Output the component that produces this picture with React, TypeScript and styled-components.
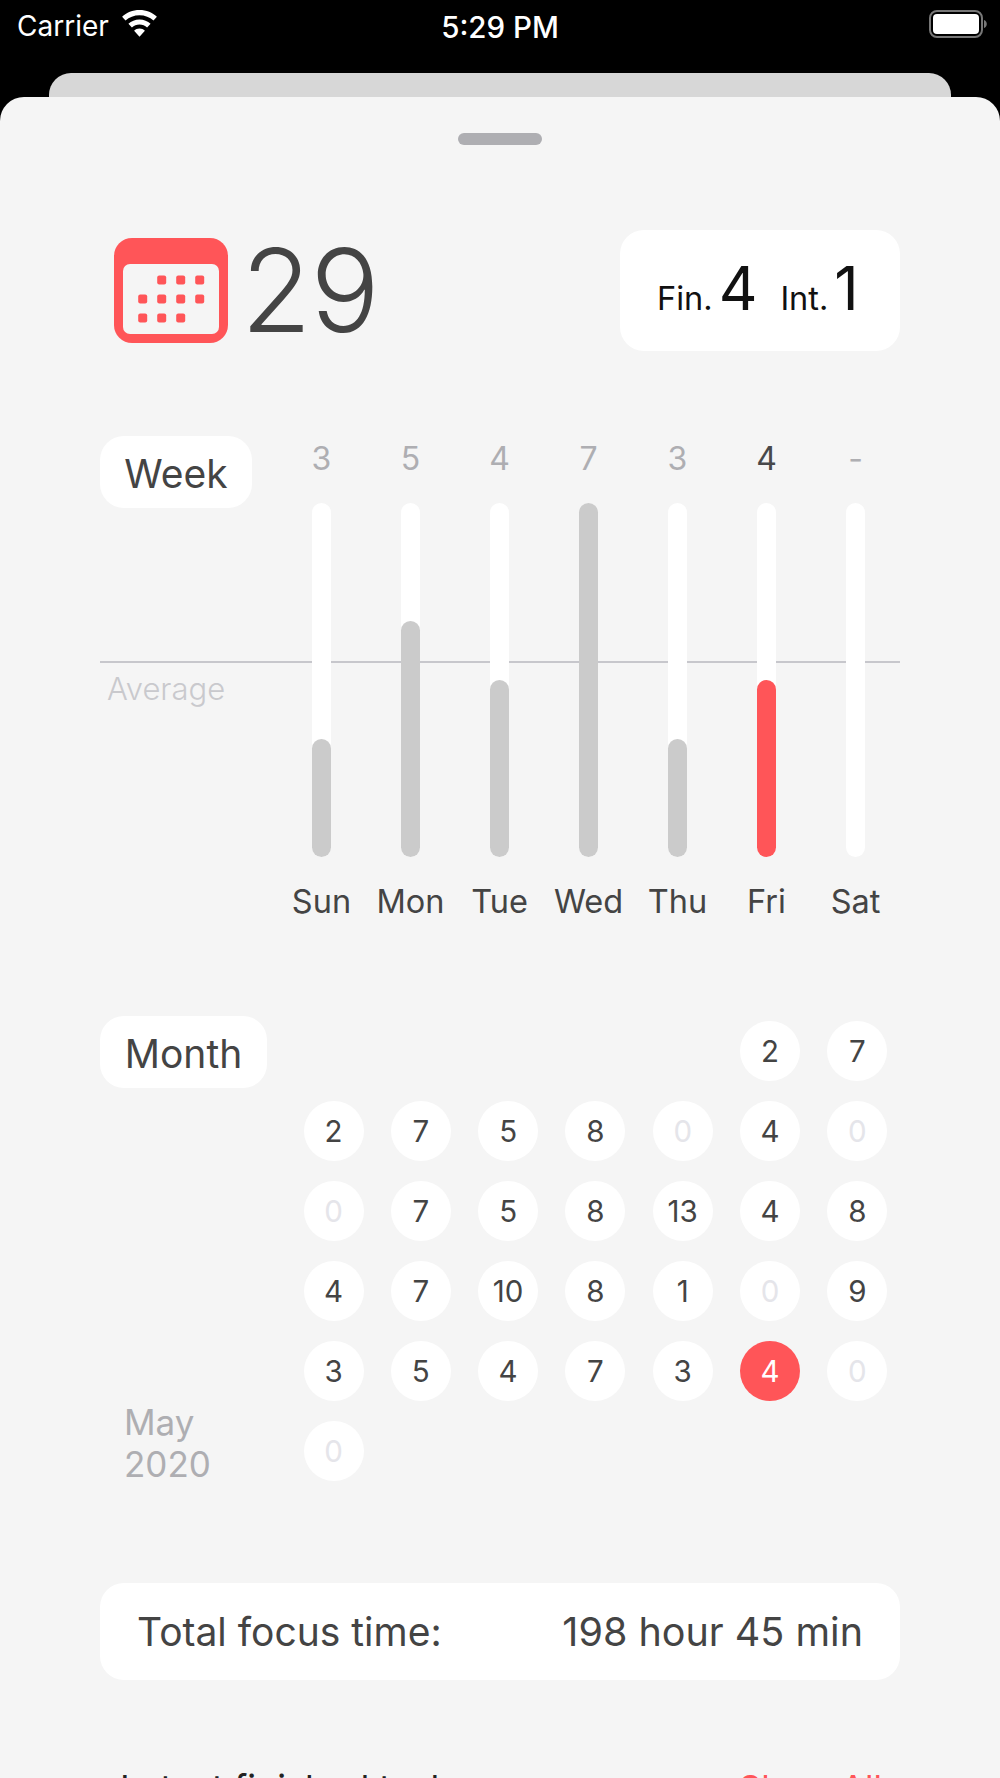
import React from "react";
import styled, { createGlobalStyle } from "styled-components";

const Global = createGlobalStyle`
  html, body { margin: 0; padding: 0; background: #000; }
  * { box-sizing: border-box; }
  body { font-family: Inter, "Liberation Sans", sans-serif; }
`;

const Screen = styled.div`
  width: 1000px;
  height: 1778px;
  overflow: hidden;
  background: #000;
  position: relative;
`;

const StatusBar = styled.div`
  height: 73px;
  display: grid;
  grid-template-columns: 1fr auto 1fr;
  padding: 10px 17px 0;
  color: #fff;
  font-size: 28px;
  line-height: 32px;
`;

const StatusLeft = styled.div`
  display: flex;
  align-items: flex-start;
  gap: 12px;
  font-weight: 400;
`;

const Clock = styled.div`
  font-weight: 500;
  font-size: 29.5px;
  padding-top: 1px;
`;

const StatusRight = styled.div`
  display: flex;
  justify-content: flex-end;
  margin-right: -4px;
`;

const BackSheet = styled.div`
  height: 24px;
  margin: 0 49px;
  background: #d7d7d7;
  border-radius: 22px 22px 0 0;
`;

const Sheet = styled.div`
  background: #f5f5f5;
  border-radius: 24px 24px 0 0;
  padding: 36px 100px 0;
  height: 1681px;
`;

const Handle = styled.div`
  width: 84px;
  height: 12px;
  margin: 0 auto;
  border-radius: 6px;
  background: #aeaeb2;
`;

const Header = styled.div`
  margin-top: 85px;
  height: 121px;
  display: flex;
  justify-content: space-between;
  align-items: center;
`;

const DateBlock = styled.div`
  display: flex;
  align-items: center;
  padding-left: 14px;
  gap: 13px;
`;

const DateNumber = styled.div`
  font-size: 115px;
  font-weight: 275;
  line-height: 121px;
  color: #444;
  letter-spacing: -1px;
`;

const Card = styled.div`
  background: #fff;
  border-radius: 24px;
`;

const CountCard = styled(Card)`
  width: 280px;
  height: 121px;
  display: flex;
  align-items: baseline;
  padding: 38px 0 0 37px;
  color: #111;
`;

const CountLabel = styled.span`
  font-size: 32.5px;
  line-height: 40px;
  font-weight: 375;
`;

const CountValue = styled.span<{ $end?: number }>`
  font-size: 60px;
  line-height: 40px;
  font-weight: 375;
  margin: 0 ${(p) => p.$end ?? 0}px 0 6px;
`;

const Pill = styled(Card)<{ $w: number }>`
  height: 72px;
  display: inline-flex;
  align-items: center;
  justify-content: center;
  padding-top: 2px;
  width: ${(p) => p.$w}px;
  font-size: 39px;
  color: #444;
  font-weight: 375;
`;

const WeekSection = styled.section`
  margin-top: 85px;
  position: relative;
  display: grid;
  grid-template-columns: 177px 1fr;
`;

const AverageLine = styled.div`
  position: absolute;
  left: 0;
  right: 0;
  top: 225px;
  height: 2px;
  background: #c7c7cc;
`;

const AverageLabel = styled.div`
  position: absolute;
  left: 7px;
  top: 237px;
  font-size: 31px;
  font-weight: 350;
  line-height: 32px;
  color: #c9c9cd;
`;

const BarGrid = styled.div`
  display: grid;
  grid-template-columns: repeat(7, 89px);
  position: relative;
`;

const BarColumn = styled.div`
  display: flex;
  flex-direction: column;
  align-items: center;
`;

const BarValue = styled.div<{ $today?: boolean }>`
  height: 44px;
  line-height: 46px;
  font-size: 32px;
  font-weight: 375;
  color: ${(p) => (p.$today ? "#48484a" : "#aeaeb2")};
  margin-bottom: 23px;
`;

const BarTrack = styled.div`
  width: 19px;
  height: 354px;
  background: #fff;
  border-radius: 9.5px;
  display: flex;
  align-items: flex-end;
`;

const BarFill = styled.div<{ $today?: boolean }>`
  width: 100%;
  background: ${(p) => (p.$today ? "#ff5558" : "#cbcbcb")};
  border-radius: 9.5px;
`;

const DayLabel = styled.div`
  margin-top: 24px;
  height: 42px;
  line-height: 42px;
  font-size: 32.5px;
  font-weight: 375;
  color: #444;
`;

const MonthSection = styled.section`
  margin-top: 93px;
  display: grid;
  grid-template-columns: 203.5px 584px;
`;

const MonthSide = styled.div`
  display: flex;
  flex-direction: column;
  justify-content: space-between;
  align-items: flex-start;
`;

const MonthName = styled.div`
  padding-left: 24px;
  font-size: 35px;
  font-weight: 375;
  line-height: 42px;
  color: #aeaeb2;
  margin-bottom: -4px;
`;

const DayGrid = styled.div`
  margin-top: 5px;
  display: grid;
  grid-template-columns: repeat(7, 60px);
  grid-auto-rows: 60px;
  column-gap: 27.3px;
  row-gap: 20px;
`;

const DayDot = styled.div<{ $zero?: boolean; $today?: boolean }>`
  width: 60px;
  height: 60px;
  border-radius: 50%;
  display: flex;
  align-items: center;
  justify-content: center;
  font-size: 29.5px;
  font-weight: 375;
  background: ${(p) => (p.$today ? "#ff5558" : "#fff")};
  color: ${(p) => (p.$today ? "#fff" : p.$zero ? "#e5e5ea" : "#444")};
`;

const TotalCard = styled(Card)`
  margin-top: 102px;
  height: 97px;
  padding: 0 37px;
  display: flex;
  justify-content: space-between;
  align-items: center;
  font-size: 39px;
  font-weight: 375;
  color: #444;
`;

const TotalValue = styled.span`
  font-size: 39.5px;
`;

const TasksHeader = styled.div`
  margin-top: 86px;
  padding: 0 18px 0 20px;
  display: flex;
  justify-content: space-between;
  font-size: 36px;
  line-height: 44px;
  color: #222;
`;

const ShowAll = styled.span`
  color: #ff5558;
  font-size: 35px;
`;

const WifiIcon = () => (
  <svg width="37" height="27" viewBox="0 0 36 27" fill="#fff" aria-hidden>
    <path d="M18 0C11 0 5 2.6.6 6.8l3.4 3.8C7.7 7.2 12.6 5.2 18 5.2s10.3 2 14 5.4l3.4-3.8C31 2.6 25 0 18 0z" />
    <path d="M18 9.4c-4.3 0-8.2 1.6-11.1 4.3l3.5 3.9c2-1.8 4.7-3 7.6-3s5.6 1.2 7.6 3l3.5-3.9C26.2 11 22.3 9.4 18 9.4z" />
    <path d="M18 18.6c-2.1 0-4 .8-5.4 2.1L18 26.8l5.4-6.1c-1.4-1.3-3.3-2.1-5.4-2.1z" />
  </svg>
);

const BatteryIcon = () => (
  <svg width="58" height="28" viewBox="0 0 58 28" aria-hidden>
    <rect x="1" y="1" width="52" height="26" rx="7" fill="none" stroke="#777" strokeWidth="2" />
    <rect x="4" y="4" width="46" height="20" rx="4" fill="#fff" />
    <path d="M55 10c1.7.5 2.8 2.2 2.8 4s-1.1 3.5-2.8 4z" fill="#777" />
  </svg>
);

const CalendarIcon = () => {
  const xs = [28.7, 47.7, 66.7, 85.7];
  const ys = [42, 61, 80];
  const on = [
    [1, 2, 3],
    [0, 1, 2, 3],
    [0, 1, 2],
  ];
  return (
    <svg width="114" height="105" viewBox="0 0 114 105" aria-hidden>
      <rect width="114" height="105" rx="18" fill="#ff5558" />
      <rect x="9" y="26" width="96" height="70" rx="7" fill="#f5f5f5" />
      {on.map((row, r) =>
        row.map((c) => (
          <rect key={`${r}-${c}`} x={xs[c] - 4.5} y={ys[r] - 4.5} width="9" height="9" rx="2" fill="#ff5558" />
        )),
      )}
    </svg>
  );
};

const week = [
  { day: "Sun", value: "3", fill: 118 },
  { day: "Mon", value: "5", fill: 236 },
  { day: "Tue", value: "4", fill: 177 },
  { day: "Wed", value: "7", fill: 354 },
  { day: "Thu", value: "3", fill: 118 },
  { day: "Fri", value: "4", fill: 177, today: true },
  { day: "Sat", value: "-", fill: 0 },
];

const days: (number | null)[] = [
  null, null, null, null, null, 2, 7,
  2, 7, 5, 8, 0, 4, 0,
  0, 7, 5, 8, 13, 4, 8,
  4, 7, 10, 8, 1, 0, 9,
  3, 5, 4, 7, 3, 4, 0,
  0,
];
const todayIndex = 33;

export default function App() {
  return (
    <Screen>
      <Global />
      <StatusBar>
        <StatusLeft>
          Carrier
          <WifiIcon />
        </StatusLeft>
        <Clock>5:29 PM</Clock>
        <StatusRight>
          <BatteryIcon />
        </StatusRight>
      </StatusBar>
      <BackSheet />
      <Sheet>
        <Handle />
        <Header>
          <DateBlock>
            <CalendarIcon />
            <DateNumber>29</DateNumber>
          </DateBlock>
          <CountCard>
            <CountLabel>Fin.</CountLabel>
            <CountValue $end={23}>4</CountValue>
            <CountLabel>Int.</CountLabel>
            <CountValue>1</CountValue>
          </CountCard>
        </Header>

        <WeekSection>
          <AverageLine />
          <AverageLabel>Average</AverageLabel>
          <div>
            <Pill $w={152}>Week</Pill>
          </div>
          <BarGrid>
            {week.map((d) => (
              <BarColumn key={d.day}>
                <BarValue $today={d.today}>{d.value}</BarValue>
                <BarTrack>
                  <BarFill $today={d.today} style={{ height: d.fill }} />
                </BarTrack>
                <DayLabel>{d.day}</DayLabel>
              </BarColumn>
            ))}
          </BarGrid>
        </WeekSection>

        <MonthSection>
          <MonthSide>
            <Pill $w={167}>Month</Pill>
            <MonthName>
              May
              <br />
              2020
            </MonthName>
          </MonthSide>
          <DayGrid>
            {days.map((v, i) =>
              v === null ? (
                <div key={i} />
              ) : (
                <DayDot key={i} $zero={v === 0} $today={i === todayIndex}>
                  {v}
                </DayDot>
              ),
            )}
          </DayGrid>
        </MonthSection>

        <TotalCard>
          <span>Total focus time:</span>
          <TotalValue>198 hour 45 min</TotalValue>
        </TotalCard>

        <TasksHeader>
          <span>Latest finished tasks</span>
          <ShowAll>Show All</ShowAll>
        </TasksHeader>
      </Sheet>
    </Screen>
  );
}
